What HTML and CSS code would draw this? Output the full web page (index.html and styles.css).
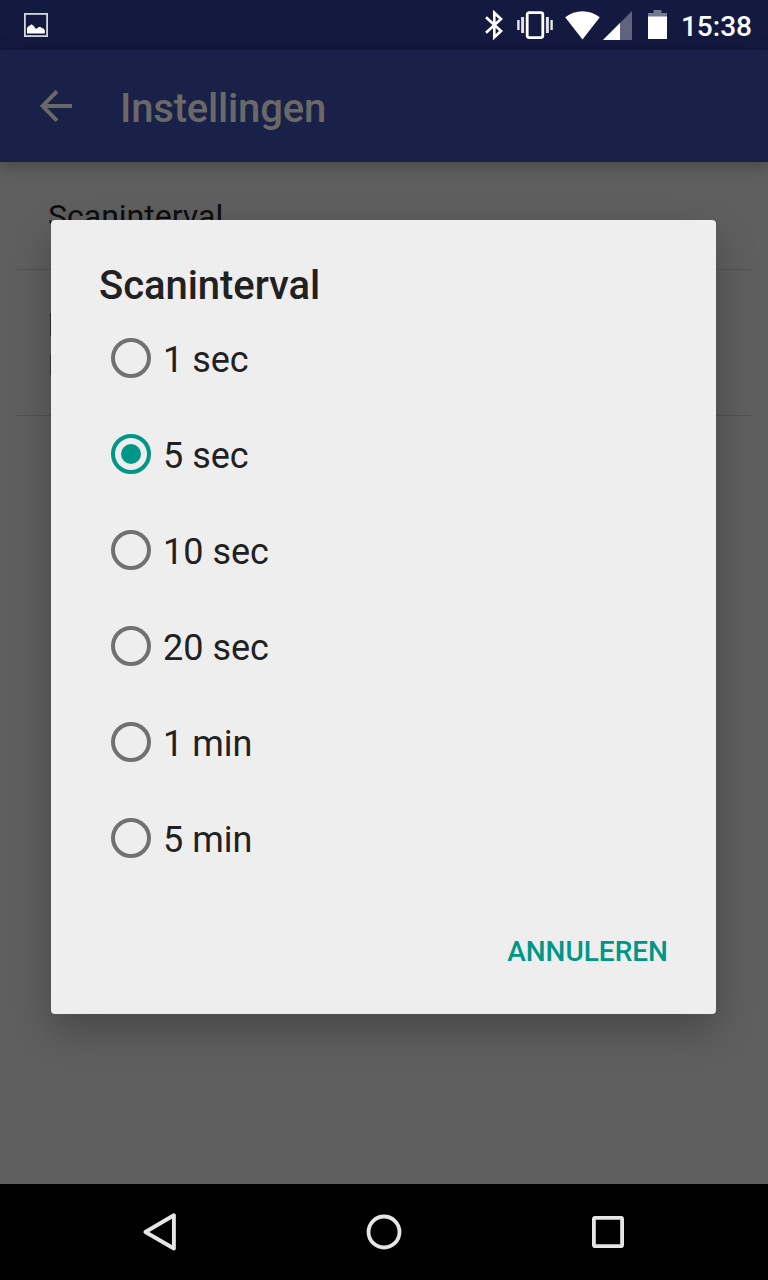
FILE: index.html
```
<!DOCTYPE html>
<html lang="nl">
<head>
<meta charset="utf-8">
<title>Instellingen</title>
<link rel="stylesheet" href="styles.css">
</head>
<body>
<div class="screen">
  <header class="status-bar">
    <svg class="notification" width="24" height="24" viewBox="0 0 24 24"><rect x="0.9" y="0.9" width="22.2" height="22.2" fill="none" stroke="#d3d7dc" stroke-width="1.8"/><path d="M3 20.5V15l2-2.2 1.2-.3L7 11.4h1l1 1 1 .8 1.4 2.3h1.8l1-1.2 1.8-.5 1.8 1.2 1.7.5 1.3 1.8v3.2z" fill="#fff"/></svg>
    <div class="status-icons">
      <svg class="bluetooth" width="20" height="30" viewBox="0 0 20 30"><path d="M2 7.2L17 21l-6.7 6.3V2.7L17 8.9 2 22.8" fill="none" stroke="#fff" stroke-width="2.7"/></svg>
      <svg class="vibrate" width="36" height="28" viewBox="0 0 36 28"><rect x="10.2" y="1.6" width="15.6" height="25" rx="2" fill="none" stroke="#fff" stroke-width="2.8"/><path d="M1.4 9v10M34.6 9v10" stroke="#e9eaf0" stroke-width="2.4"/><path d="M5.6 6v16M30.4 6v16" stroke="#e0e1e9" stroke-width="3"/></svg>
      <svg class="wifi" width="35" height="29" viewBox="0 0 35 29"><path d="M.2 6.2Q8 .2 17.5.2T34.8 6.2L17.5 28.4z" fill="#fff"/></svg>
      <svg class="signal" width="29" height="29" viewBox="0 0 29 29"><path d="M0 29L29 0v29z" fill="#61647f"/><path d="M0 29L17 12v17z" fill="#fff"/></svg>
      <svg class="battery" width="19" height="29" viewBox="0 0 19 29"><path d="M5.5 0h8v3H19v4H0V3h5.5z" fill="#747791"/><path d="M0 6.5h19V29H0z" fill="#fff"/></svg>
      <span class="clock">15:38</span>
    </div>
  </header>
  <div class="toolbar">
    <svg class="back" width="32" height="32" viewBox="0 0 32 32"><path d="M32 16H3M17 1.3L2.5 16 17 30.7" fill="none" stroke="#6b6968" stroke-width="3.9"/></svg>
    <h1 class="page-title">Instellingen</h1>
  </div>
  <main class="content">
    <div class="setting"><span class="setting-name">Scaninterval</span></div>
    <div class="setting setting-tall"><i class="stem stem-large"></i><i class="stem stem-small"></i></div>
    <section class="dialog">
      <h2 class="dialog-title">Scaninterval</h2>
      <div class="options">
        <div class="option"><span class="radio"></span><span class="label">1 sec</span></div>
        <div class="option"><span class="radio checked"></span><span class="label">5 sec</span></div>
        <div class="option"><span class="radio"></span><span class="label">10 sec</span></div>
        <div class="option"><span class="radio"></span><span class="label">20 sec</span></div>
        <div class="option"><span class="radio"></span><span class="label">1 min</span></div>
        <div class="option"><span class="radio"></span><span class="label">5 min</span></div>
      </div>
      <div class="actions"><span class="cancel">ANNULEREN</span></div>
    </section>
  </main>
  <nav class="nav-bar">
    <svg width="40" height="40" viewBox="0 0 40 40"><path d="M33.9 3.3v33.2L5.4 20z" fill="none" stroke="#e6e6e6" stroke-width="3.9" stroke-linejoin="round"/></svg>
    <svg width="40" height="40" viewBox="0 0 40 40"><circle cx="20" cy="20" r="15.5" fill="none" stroke="#e6e6e6" stroke-width="3.8"/></svg>
    <svg width="40" height="40" viewBox="0 0 40 40"><rect x="5.9" y="5.9" width="28.2" height="28.2" rx="1" fill="none" stroke="#e6e6e6" stroke-width="3.8"/></svg>
  </nav>
</div>
</body>
</html>
```
FILE: styles.css
```
* { box-sizing: border-box; }
body { margin: 0; font-family: Roboto, sans-serif; background: #000; }
h1, h2 { margin: 0; font-weight: 500; font-size: 40px; line-height: 48px; }
svg { display: block; flex: none; }
.screen { width: 768px; height: 1280px; display: flex; flex-direction: column; overflow: hidden; }

.status-bar { height: 50px; flex: none; background: #14193f; display: flex; align-items: flex-start; justify-content: space-between; padding: 0 16px 0 24px; }
.notification { margin-top: 13px; }
.status-icons { display: flex; align-items: flex-start; }
.bluetooth { margin: 10px 13px 0 0; }
.vibrate { margin: 11px 12px 0 0; }
.wifi { margin: 11px 3px 0 0; }
.signal { margin: 11px 16px 0 0; }
.battery { margin: 10px 14px 0 0; }
.clock { color: #fff; font-size: 28px; font-weight: 500; line-height: 32px; margin-top: 11px; }

.toolbar { height: 112px; flex: none; background: #1a2148; display: flex; align-items: center; padding-left: 40px; color: #6b6968; z-index: 1; box-shadow: 0 4px 16px rgba(0, 0, 0, .28); }
.page-title { margin: 6px 0 0 48px; letter-spacing: -.18px; }

.content { flex: 1; background: #5f5f5f; padding: 0 16px; position: relative; }
.setting { height: 108px; border-bottom: 1px solid #535353; padding: 35px 32px 0; }
.setting-name { display: block; font-size: 32px; line-height: 38px; color: #0d0d0d; }
.setting-tall { height: 146px; padding: 43px 34px 0; }
.stem { display: block; width: 2px; background: #2d2d2d; }
.stem-large { height: 23px; }
.stem-small { height: 20px; margin-top: 19px; background: #3a3a3a; }

.dialog { position: absolute; left: 51px; top: 58px; width: 665px; height: 794px; z-index: 2; background: #eee; border-radius: 4px; padding: 42px 48px 0; color: #212121; box-shadow: 0 16px 40px rgba(0, 0, 0, .25); }
.dialog-title { letter-spacing: -.06px; }
.options { padding: 0 12px; }
.option { height: 96px; display: flex; align-items: center; gap: 12px; }
.radio { width: 40px; height: 40px; border: 4px solid #717171; border-radius: 50%; display: grid; place-items: center; }
.radio.checked { border-color: #009688; }
.radio.checked::after { content: ""; width: 20px; height: 20px; border-radius: 50%; background: #009688; }
.label { font-size: 36px; line-height: 44px; padding-top: 3px; }
.actions { display: flex; justify-content: flex-end; margin-top: 50px; }
.cancel { font-size: 28px; font-weight: 500; line-height: 32px; color: #009688; }

.nav-bar { height: 96px; flex: none; background: #000; display: flex; align-items: center; justify-content: space-between; padding: 0 140px; }
```
